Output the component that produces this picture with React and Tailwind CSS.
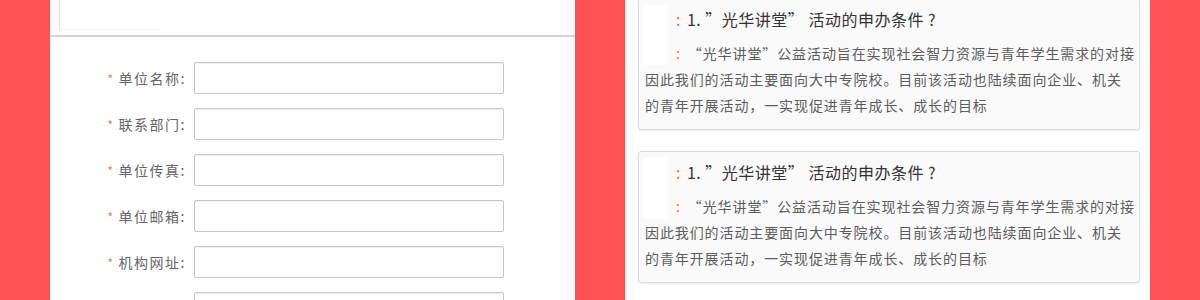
import React from 'react';

const fields = ['单位名称', '联系部门', '单位传真', '单位邮箱', '机构网址', ''];

const font = { fontFamily: '"Noto Sans CJK SC", "Noto Sans", sans-serif' };

function FaqCard({ className = '' }) {
  return (
    <div className={`border border-[#dcdcdc] rounded-[3px] bg-[#fafafa] shadow-[0_1px_2px_rgba(0,0,0,0.08)] pl-[6px] pr-[1px] pt-[6px] pb-[11px] ${className}`}>
      {/* white placeholder block */}
      <div className="float-left w-[24px] h-[60px] -ml-[2px] mr-[9px] bg-white"></div>
      <div className="h-[28px] leading-[28px] text-[16px] text-[#333] tracking-[0.5px] mb-[7px] whitespace-nowrap">
        <span className="text-[#f26b3a] mr-[6px]">:</span>
        1. ”光华讲堂” 活动的申办条件 ?
      </div>
      <p className="text-[14px] leading-[26px] text-[#5c5c5c] tracking-[0.9px] whitespace-nowrap">
        <span className="text-[#f26b3a] mr-[7px]">:</span>
        “光华讲堂”公益活动旨在实现社会智力资源与青年学生需求的对接
        <br />
        因此我们的活动主要面向大中专院校。目前该活动也陆续面向企业、机关
        <br />
        的青年开展活动，一实现促进青年成长、成长的目标
      </p>
    </div>
  );
}

export default function App() {
  return (
    <div className="w-[1200px] h-[300px] overflow-hidden bg-[#ff5353] flex" style={font}>
      {/* Left panel: form */}
      <div className="ml-[50px] w-[525px] h-full bg-white flex flex-col">
        <div className="shrink-0 h-[37px] border-b-2 border-[#d4d4d4] px-[9px]">
          <div className="w-[100px] h-[30px] border-l border-[#f6d9cc] border-b border-b-[#f2f2f2]"></div>
        </div>
        <div className="shrink-0 flex flex-col gap-[14px] pt-[25px]">
          {fields.map((f, i) => (
            <div key={i} className="shrink-0 flex items-center h-[32px]">
              <div className="w-[144px] flex justify-end items-center pr-[8px] text-[14px] text-[#666] tracking-[1.5px]">
                {f && (
                  <>
                    <span className="text-[#f07a3c] text-[12px] mr-[4px] relative top-[1px]">*</span>
                    <span>{f}:</span>
                  </>
                )}
              </div>
              <div className="w-[310px] h-[32px] border border-[#c6c6c6] rounded-[2px] bg-white shadow-[inset_0_1px_1px_rgba(0,0,0,0.06)]"></div>
            </div>
          ))}
        </div>
      </div>

      {/* Right panel: FAQ cards */}
      <div className="ml-[50px] w-[525px] h-full bg-white pl-[13px] pr-[10px]">
        <FaqCard className="-mt-[2px]" />
        <FaqCard className="mt-[21px]" />
      </div>
    </div>
  );
}
